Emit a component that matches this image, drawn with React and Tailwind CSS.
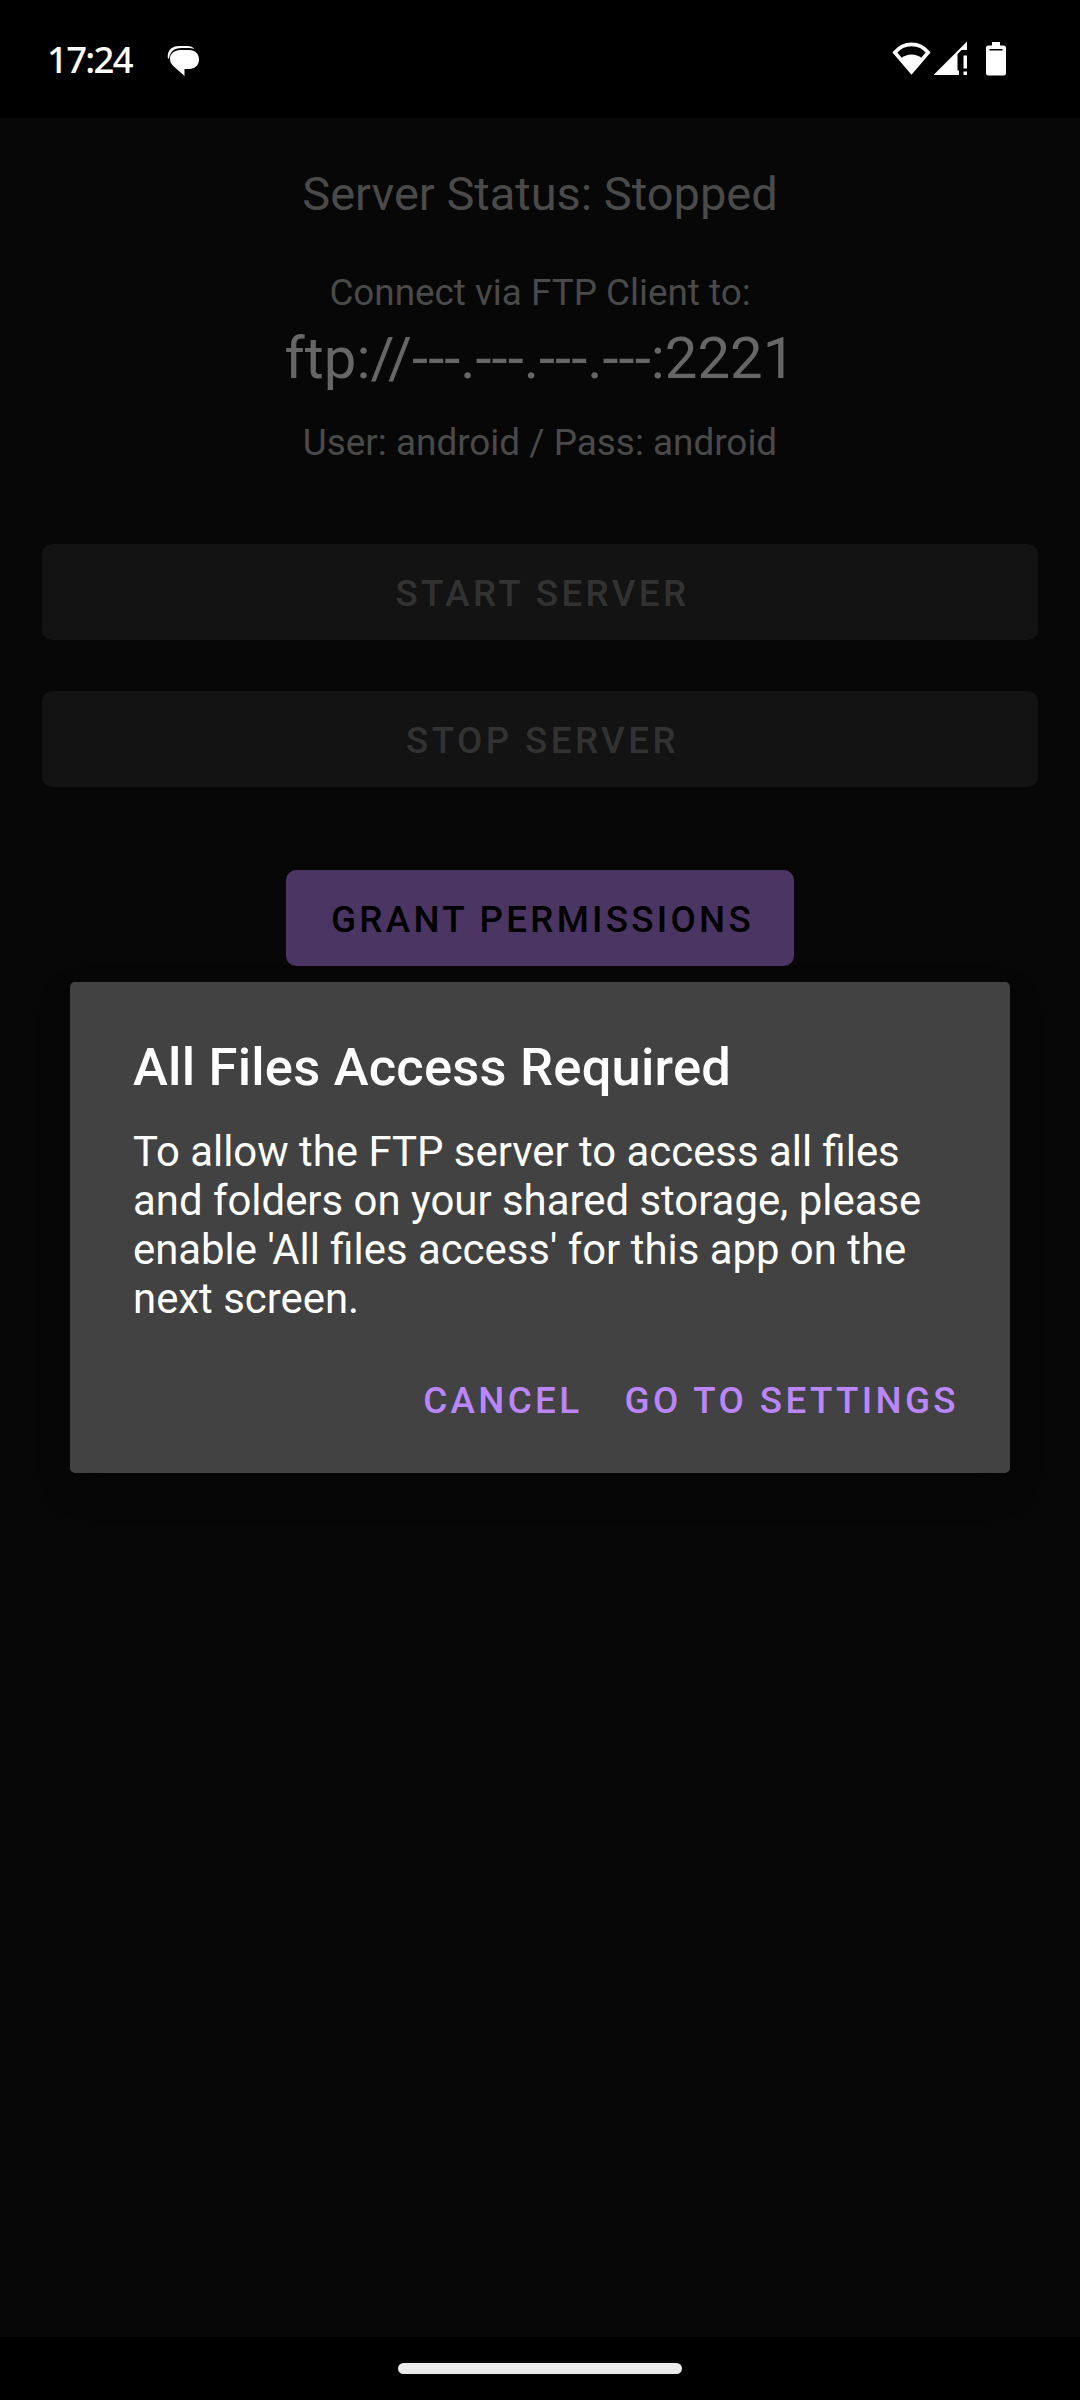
function StatusBar() {
  return (
    <header className="flex h-[118px] w-full shrink-0 items-start bg-black text-white">
      <span className="ml-[47px] mt-[37px] w-[120px] font-['Noto_Sans',sans-serif] text-[36.500px] leading-[44px] font-medium tracking-[-1.700px] whitespace-nowrap">17:24</span>
      <svg className="mt-[45px] h-[32px] w-[33px]" viewBox="0 0 33 32" fill="currentColor">
        <path d="M1 14C-.4 6.500 4 1 12 1H20C23.500 1 26 2.200 27.500 4.200C25.500 3.200 23 3 20.500 3H14.500C7 3 3 7 2.200 13Z" />
        <path d="M13.500 5H22C28.500 5 32 9 32 14.500C32 20 28 24 22 24H17.500V31L8 22.500C4.700 19.700 3 17.500 3 14C3 8.500 7.500 5 13.500 5Z" />
      </svg>
      <div className="mr-[74px] ml-auto mt-[41px] flex items-start">
        <svg className="h-[35px] w-[40px]" viewBox="0 0 40 35">
          <path d="M2.800 11.500C11.800 .7 27.500 .7 36.200 11.500L19.500 31Z" fill="none" stroke="currentColor" strokeWidth="3.600" />
          <path d="M9.500 17C14.500 12.200 24.500 12.200 29.500 17L19.500 32Z" fill="currentColor" />
        </svg>
        <svg className="ml-[2px] h-[34px] w-[34px]" viewBox="0 0 34 34" fill="currentColor">
          <path d="M0 34V33.500L33 .5V9H27.500L23.500 13V29.500H25V34Z" />
          <path d="M29.500 14.500H33V27.500H29.500ZM29.500 30.500H33V34H29.500Z" />
        </svg>
        <svg className="ml-[18px] mt-px h-[34px] w-[20px]" viewBox="0 0 20 34" fill="currentColor">
          <path fillRule="evenodd" d="M6 0H14V3.500H17.500Q20 3.500 20 6V31Q20 33.500 17.500 33.500H2.500Q0 33.500 0 31V6Q0 3.500 2.500 3.500H6ZM3.500 7V8.500H16.500V7Z" />
        </svg>
      </div>
    </header>
  );
}

function DisabledButton({ children, className }) {
  return (
    <button disabled className={"h-24 w-[996px] rounded-[10px] bg-[#131313] pt-[4px] pl-[5px] text-[36.750px] leading-[44px] font-medium tracking-[3.400px] text-[#323232] " + className}>
      {children}
    </button>
  );
}

function Dialog() {
  return (
    <section className="absolute top-[982px] left-[70px] flex h-[491px] w-[940px] flex-col rounded-[5px] bg-[#424242] pt-[54px] pr-[51px] pl-[63px] shadow-[0_16px_34px_rgba(0,0,0,0.2)]">
      <h1 className="text-[52.500px] leading-[62px] font-medium tracking-[0.220px] text-white">All Files Access Required</h1>
      <p className="mt-[29px] text-[41.880px] leading-[49px] whitespace-nowrap text-white">
        To allow the FTP server to access all files<br />
        and folders on your shared storage, please<br />
        enable 'All files access' for this app on the<br />
        next screen.
      </p>
      <div className="mt-[56px] flex justify-end gap-[42px] text-[36.750px] leading-[44px] font-medium tracking-[3.380px] text-[#bb86fc]">
        <button>CANCEL</button>
        <button>GO TO SETTINGS</button>
      </div>
    </section>
  );
}

export default function App() {
  return (
    <div className="relative flex h-[2400px] w-[1080px] flex-col overflow-hidden bg-[#070707] font-['Roboto',sans-serif]">
      <StatusBar />
      <main className="flex flex-1 flex-col items-center pt-12 text-[#4a4a4a]">
        <p className="text-[47px] leading-[56px]">Server Status: Stopped</p>
        <p className="mt-[49px] text-[36.850px] leading-[44px]">Connect via FTP Client to:</p>
        <p className="mt-[9px] text-[58.100px] leading-[68px] text-[#666]">ftp://---.---.---.---:2221</p>
        <p className="mt-[29px] text-[36.900px] leading-[44px]">User: android / Pass: android</p>
        <DisabledButton className="mt-[79px]">START SERVER</DisabledButton>
        <DisabledButton className="mt-[51px]">STOP SERVER</DisabledButton>
        <button className="mt-[83px] h-24 w-[508px] rounded-[10px] bg-[#4a3563] pt-[4px] pl-[5px] text-[36.750px] leading-[44px] font-medium tracking-[3.280px] text-black">
          GRANT PERMISSIONS
        </button>
      </main>
      <footer className="flex h-[63px] shrink-0 items-start justify-center bg-black pt-[26px]">
        <div className="h-[11px] w-[284px] rounded-full bg-[#ebebeb]" />
      </footer>
      <Dialog />
    </div>
  );
}
